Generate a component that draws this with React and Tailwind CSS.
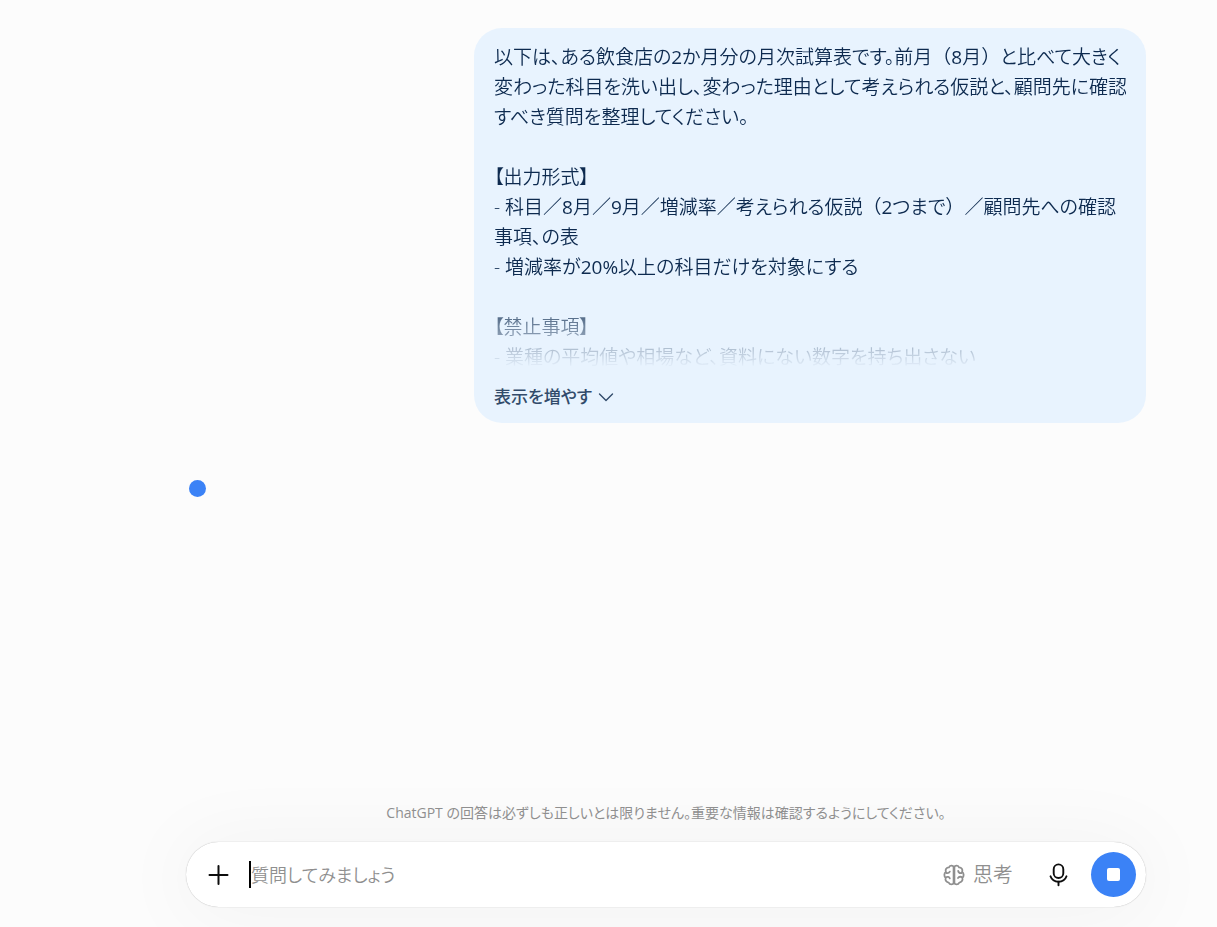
import React, { useState } from 'react';

const LINES = [
  '以下は、ある飲食店の2か月分の月次試算表です。前月（8月）と比べて大きく',
  '変わった科目を洗い出し、変わった理由として考えられる仮説と、顧問先に確認',
  'すべき質問を整理してください。',
  '',
  '【出力形式】',
  '- 科目／8月／9月／増減率／考えられる仮説（2つまで）／顧問先への確認',
  '事項、の表',
  '- 増減率が20%以上の科目だけを対象にする',
  '',
  '【禁止事項】',
  '- 業種の平均値や相場など、資料にない数字を持ち出さない',
];

// Kana is set proportionally; brackets keep their full width and figures the regular weight
function Line({ text }) {
  return (
    <span className="block min-h-[30px]">
      {text.split(/([（）]|[0-9%]+)/).map((part, i) =>
        i % 2 ? <span key={i} className="font-normal [font-feature-settings:normal]">{part}</span> : part
      )}
    </span>
  );
}

function BrainIcon() {
  return (
    <svg width="22" height="22" viewBox="0 0 22 22" fill="none" stroke="currentColor" strokeWidth="1.8" strokeLinecap="round" strokeLinejoin="round" aria-hidden="true">
      <path d="M11 3.2C9.8 0.9 6.6 1.2 5.9 3.4C3.4 3.4 2 5.6 2.9 7.8C0.9 9.4 0.9 12.4 2.6 13.8C2 16.4 3.4 18.4 5.7 18.6C6.8 21.1 10 20.9 11 18.8C12 20.9 15.2 21.1 16.3 18.6C18.6 18.4 20 16.4 19.4 13.8C21.1 12.4 21.1 9.4 19.1 7.8C20 5.6 18.6 3.4 16.1 3.4C15.4 1.2 12.2 0.9 11 3.2Z" />
      <path d="M11 3.4V18.6" strokeWidth="2.6" />
      <path d="M3.4 9C4.6 9.2 6.2 8.8 6.8 7.6" />
      <path d="M2.8 13.4C4.4 12.4 6.4 12.9 6.8 14.4" />
      <path d="M15.2 7C15.5 8.5 17 9.3 18.6 9" />
      <path d="M15 14C16 12.5 17.9 12.4 19.2 13.4" />
    </svg>
  );
}

function MicIcon() {
  return (
    <svg width="24" height="24" viewBox="0 0 24 24" fill="none" stroke="currentColor" strokeWidth="1.9" strokeLinecap="round" aria-hidden="true">
      <rect x="7.7" y="1.4" width="9.6" height="13.6" rx="4.8" />
      <path d="M4.5 13.3C5.7 16.7 8.8 18.7 12.5 18.7C16.2 18.7 19.3 16.7 20.5 13.3" />
      <path d="M12.5 18.7V22.3" />
    </svg>
  );
}

export default function App() {
  const [text, setText] = useState('');
  const [open, setOpen] = useState(false);

  return (
    <div className="flex min-h-screen flex-col overflow-hidden bg-[#fcfcfc] pl-[115px] font-['Open_Sans','Noto_Sans_CJK_JP',sans-serif]">
      <main className="mx-auto flex w-full max-w-[960px] flex-1 flex-col pt-7">
        {/* User message */}
        <article className="w-[70%] self-end rounded-[28px] bg-[#e8f3fe] px-5 pt-3.5 pb-3 text-[#0d2a4f]">
          <p className={`text-[19px] leading-[30px] font-[350] whitespace-pre [font-feature-settings:'palt'] ${open ? '' : '[mask-image:linear-gradient(to_top,transparent_4px,black_80px)]'}`}>
            {LINES.map((line, i) => <Line key={i} text={line} />)}
          </p>
          <button
            type="button"
            onClick={() => setOpen(!open)}
            className="mt-2.5 flex h-[29px] items-center gap-1.5 text-[17px] font-medium text-[#324b6b] [font-feature-settings:'palt']"
          >
            表示を増やす
            <svg width="16" height="16" viewBox="0 0 16 16" fill="none" stroke="currentColor" strokeWidth="1.4" strokeLinecap="round" strokeLinejoin="round" aria-hidden="true">
              <path d="M1.5 5L8 11.5L14.5 5" />
            </svg>
          </button>
        </article>

        {/* Streaming indicator */}
        <div className="mt-[57px] ml-[3px] size-[17px] rounded-full bg-[#3b82f6]" role="status" aria-label="生成中" />
      </main>

      <footer className="mx-auto w-full max-w-[960px] pb-5">
        <p className="pb-[19px] text-center text-[14px] leading-5 text-[#8f8f8f] [font-feature-settings:'palt']">
          ChatGPT の回答は必ずしも正しいとは限りません。重要な情報は確認するようにしてください。
        </p>
        <form
          onSubmit={e => e.preventDefault()}
          className="flex h-[65px] items-center rounded-full bg-white pr-2.5 pl-5 shadow-[0_0_1px_rgba(0,0,0,0.35),0_4px_80px_8px_rgba(0,0,0,0.04)]"
        >
          <button type="button" aria-label="追加" className="text-[#0d0d0d]">
            <svg width="24" height="24" viewBox="0 0 24 24" fill="none" stroke="currentColor" strokeWidth="2" strokeLinecap="round" aria-hidden="true">
              <path d="M3.5 12H21.5M12.5 3V21" />
            </svg>
          </button>
          <span className="ml-[19px] h-[27px] w-0.5 bg-black" />
          <input
            type="text"
            aria-label="質問"
            value={text}
            onChange={e => setText(e.target.value)}
            placeholder="質問してみましょう"
            className="h-10 min-w-0 flex-1 text-[18px] font-[350] text-[#0d0d0d] outline-none placeholder:text-[#8f8f8f] [font-feature-settings:'palt']"
          />
          <button type="button" className="flex items-center gap-2 text-[20px] font-[350] text-[#8f8f8f]">
            <BrainIcon />
            思考
          </button>
          <button type="button" aria-label="音声入力" className="ml-[33px] text-[#0d0d0d]">
            <MicIcon />
          </button>
          <button type="button" aria-label="停止" className="ml-[21px] flex size-[45px] items-center justify-center rounded-full bg-[#3b82f6]">
            <span className="size-[13px] rounded-[2px] bg-white" />
          </button>
        </form>
      </footer>
    </div>
  );
}
